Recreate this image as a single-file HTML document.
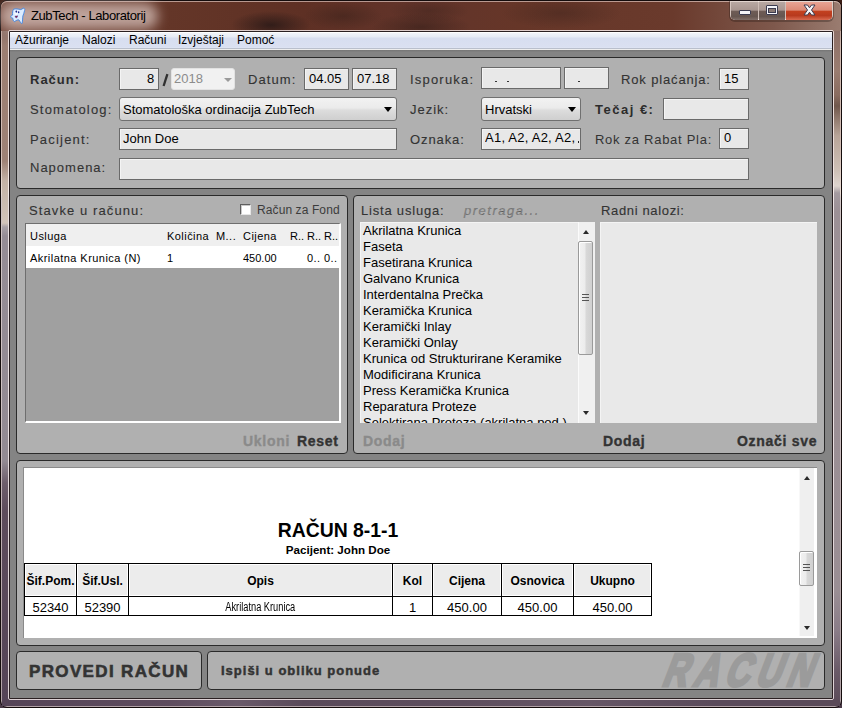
<!DOCTYPE html>
<html><head><meta charset="utf-8">
<style>
*{box-sizing:border-box;margin:0;padding:0}
html,body{width:842px;height:708px;overflow:hidden;background:linear-gradient(180deg,#3a1c14 0px,#3a1c14 40px,#4a3a48 660px)}
body{position:relative;font-family:"Liberation Sans",sans-serif;color:#000}
.a{position:absolute}
#frame{left:0;top:0;width:842px;height:708px;border-radius:7px;border:1px solid #140c0c;
 background:linear-gradient(180deg,#6a3e30 0px,#7a5246 31px,#9a7a6e 45px,#9c7e72 150px,#c0aca0 172px,#d2c4ba 192px,#a69ea4 197px,#978e96 210px,#928892 420px,#7a6a78 480px,#5e4e5c 620px,#534353 708px);
 box-shadow:inset 0 0 0 1px rgba(255,240,235,.55)}
#title{left:1px;top:1px;width:840px;height:30px;border-radius:6px 6px 0 0;
 background:
  radial-gradient(ellipse 40px 14px at 270px 24px,rgba(30,20,20,.7),rgba(30,20,20,0)),
  radial-gradient(ellipse 50px 14px at 420px 26px,rgba(40,25,20,.45),rgba(40,25,20,0)),
  radial-gradient(ellipse 60px 16px at 560px 12px,rgba(50,30,25,.35),rgba(50,30,25,0)),radial-gradient(ellipse 40px 14px at 342px 15px,rgba(40,25,20,.35),rgba(40,25,20,0)),radial-gradient(ellipse 40px 12px at 428px 10px,rgba(40,25,20,.3),rgba(40,25,20,0)),
  linear-gradient(90deg,#7a5044 0%,#643628 20%,#5e3024 36%,#62342a 50%,#663628 62%,#6a3a2c 80%,#7e584c 92%,#9a7c70 100%);
 box-shadow:inset 0 1px 0 rgba(255,235,230,.55)}
#content{left:10px;top:32px;width:822px;height:666px;background:#848484}
#menubar{left:10px;top:32px;width:822px;height:20px;background:linear-gradient(180deg,#ffffff 0px,#ffffff 1px,#f1f4fa 1px,#e6ebf5 5px,#d7def0 6px,#dae0f1 15px,#dfe5f4 16px,#b9bfcc 16px,#b9bfcc 17px,#f0f0f0 17px,#eaeaea 18px,#777 18px,#7a7a7a 19px,#848484 20px)}
.menu{top:33px;font-size:12px;color:#000}
.pn{background:#b0b0b0;border:1px solid #2a2a2a;border-radius:4px}
.lb{font-size:13px;color:#333;-webkit-text-stroke:.12px #333;letter-spacing:.7px;white-space:nowrap}
.lbb{font-size:13px;color:#2c2c2c;font-weight:bold;letter-spacing:.6px;white-space:nowrap}
.inp{background:#e8e8e8;border:1px solid #6a6a6a;box-shadow:inset 1px 1px 0 #f4f4f4;font-size:13px;white-space:nowrap;overflow:hidden}
.cb{background:linear-gradient(180deg,#f2f2f2 0%,#ebebeb 45%,#dddddd 55%,#cfcfcf 100%);border:1px solid #707070;border-radius:3px;font-size:13px;white-space:nowrap;overflow:hidden}
.tb{font-size:11px;line-height:11px;letter-spacing:.45px;white-space:nowrap;color:#000}
.bt{font-size:14px;line-height:14px;font-weight:bold;letter-spacing:.7px;color:#333;-webkit-text-stroke:.35px currentColor;white-space:nowrap}
.rh{font-size:12px;line-height:12px;font-weight:bold;text-align:center;white-space:nowrap}
.rr{font-size:13px;line-height:13px;text-align:center;white-space:nowrap}
</style></head><body>
<div id="frame" class="a"></div>
<div class="a" style="left:2px;top:31px;width:6px;height:675px;background:linear-gradient(180deg,#8e7068 0px,#9c7e72 15px,#9e8276 130px,#c4b2a6 150px,#d2c4ba 192px,#a8a0a6 196px,#958c95 205px,#938a93 430px,#6e5e6c 452px,#5e4c5c 480px,#554457 675px)"></div>
<div class="a" style="left:834px;top:31px;width:6px;height:675px;background:linear-gradient(180deg,#8e7068 0px,#9a7c70 40px,#8a6c60 64px,#70574c 75px,#8a7266 85px,#b8a498 105px,#cec0b6 140px,#ded4ce 155px,#a49aa0 162px,#9c9096 180px,#9a8e94 560px,#8a7c88 600px,#6a5a68 640px,#5a4a58 675px)"></div>
<div class="a" style="left:2px;top:700px;width:838px;height:6px;border-radius:0 0 5px 5px;background:linear-gradient(90deg,#554457 0%,#5e4c5e 20%,#6a5a6a 28%,#5a4a5a 36%,#5e4e5e 55%,#665666 70%,#5a4a5a 85%,#5a4a58 100%)"></div>
<div id="title" class="a"></div>
<div class="a" style="left:0px;top:3px;width:158px;height:26px;border-radius:13px;background:rgba(220,200,194,.72);filter:blur(6px)"></div>
<svg class="a" style="left:6px;top:4px" width="24" height="24" viewBox="0 0 24 24">
 <path d="M7.6 5.2 C9.5 4.6 12.5 4.9 14.8 5.6 L17.4 4.2 C18.6 4.2 19.2 5.4 18.6 6.4 C18.4 8.2 17.4 10.4 16.9 12 C16.6 14.4 16.6 17.6 16 19.6 C15.2 19.8 14.2 18 13 16 C11.6 15.4 10.4 16.6 8.2 17.6 C7.2 17 7 15.6 6.8 14.2 C5.6 14 4.4 13.4 4.8 12.4 C5.2 11.6 6 11.2 6.6 11 C6.4 9.2 6.6 6.4 7.6 5.2 Z" fill="#dcecff" stroke="#4a8ae0" stroke-width="1"/>
 <path d="M8.5 6.5 C10 6 12 6.3 13.5 7 C12 9 11 11 10 13 C9 12 8.2 9 8.5 6.5Z" fill="#ffffff" opacity=".8"/>
 <ellipse cx="10.3" cy="7.6" rx=".9" ry="1.1" fill="#1a2a90"/>
 <ellipse cx="12.6" cy="8.2" rx=".8" ry="1" fill="#1a2a90"/>
 <path d="M9.2 12 Q10.4 12.2 11.6 11.8 Q11.4 13.8 10.2 13.8 Q9.2 13.6 9.2 12Z" fill="#c02030" stroke="#1a2a90" stroke-width=".5"/>
</svg>
<div class="a" style="left:31px;top:9px;font-size:13px;line-height:13px;letter-spacing:-.4px;color:#000;white-space:nowrap">ZubTech - Laboratorij</div>
<div class="a" style="left:729px;top:1px;width:105px;height:21px;border-radius:0 0 6px 6px;background:rgba(40,25,20,.35)"></div>
<div class="a" style="left:730px;top:1px;width:103px;height:19px;border-radius:0 0 5px 5px;overflow:hidden;box-shadow:inset 0 0 0 1px rgba(255,245,240,.75)">
 <div class="a" style="left:1px;top:1px;width:27px;height:18px;background:linear-gradient(180deg,#b8a8a2 0%,#a89690 45%,#6e5c56 52%,#665650 80%,#806e68 100%);border-radius:0 0 0 4px"></div>
 <div class="a" style="left:28px;top:0;width:1px;height:20px;background:rgba(255,245,240,.7)"></div>
 <div class="a" style="left:29px;top:1px;width:26px;height:18px;background:linear-gradient(180deg,#b8a8a2 0%,#a89690 45%,#6e5c56 52%,#665650 80%,#806e68 100%)"></div>
 <div class="a" style="left:55px;top:0;width:1px;height:20px;background:rgba(255,245,240,.7)"></div>
 <div class="a" style="left:56px;top:1px;width:46px;height:18px;background:linear-gradient(180deg,#e8a494 0%,#dc8a76 45%,#c2401f 52%,#b83a1e 75%,#d86a50 100%);border-radius:0 0 4px 0"></div>
</div>
<div class="a" style="left:739px;top:10px;width:12px;height:5px;background:#f4f4f8;border:1px solid #3c3c50;border-radius:1px"></div>
<div class="a" style="left:766px;top:5px;width:12px;height:10px;border:1px solid #3c3c50;border-radius:1px;background:#f4f4f8"></div>
<div class="a" style="left:768px;top:8px;width:8px;height:5px;border:1px solid #3c3c50;background:#8a7a74"></div>
<svg class="a" style="left:802px;top:4px" width="15" height="12" viewBox="0 0 15 12">
 <path d="M2 1 L5.5 1 L7.5 3.8 L9.5 1 L13 1 L9.5 6 L13 11 L9.5 11 L7.5 8.2 L5.5 11 L2 11 L5.5 6 Z" fill="#f6f6fa" stroke="#3c3c50" stroke-width="1"/>
</svg>
<div class="a" style="left:8px;top:30px;width:826px;height:670px;border:1px solid rgba(255,245,245,.8);border-radius:2px"></div><div class="a" style="left:9px;top:31px;width:824px;height:668px;border:1px solid #2a2022;border-radius:1px"></div><div id="content" class="a"></div>
<div id="menubar" class="a"></div>
<div class="a menu" style="left:15px">Ažuriranje</div>
<div class="a menu" style="left:82px">Nalozi</div>
<div class="a menu" style="left:129px">Računi</div>
<div class="a menu" style="left:178px">Izvještaji</div>
<div class="a menu" style="left:237px">Pomoć</div>

<div class="a pn" style="left:16px;top:57px;width:809px;height:132px"></div>
<div class="a pn" style="left:16px;top:195px;width:332px;height:259px"></div>
<div class="a pn" style="left:353px;top:195px;width:472px;height:259px"></div>
<div class="a pn" style="left:16px;top:460px;width:809px;height:186px"></div>
<div class="a pn" style="left:16px;top:651px;width:186px;height:39px"></div>
<div class="a pn" style="left:207px;top:651px;width:618px;height:39px"></div>


<!-- panel1 content -->
<div class="a lbb" style="left:30px;top:73px;line-height:13px;letter-spacing:1.0px">Račun:</div>
<div class="a inp" style="left:119px;top:68px;width:40px;height:22px"></div>
<div class="a" style="left:147px;top:72px;font-size:13px;line-height:13px">8</div>
<svg class="a" style="left:160px;top:72px" width="10" height="16" viewBox="0 0 10 16"><path d="M3.6 14 L7.4 2.2" stroke="#303030" stroke-width="2.3" stroke-linecap="butt"/></svg>
<div class="a" style="left:171px;top:68px;width:64px;height:22px;background:#f1f1f1;border:1px solid #e2e2e2;border-radius:3px"></div>
<div class="a" style="left:174px;top:72px;font-size:13px;line-height:13px;color:#8c8c8c">2018</div>
<div class="a" style="left:224px;top:78px;width:0;height:0;border-left:4px solid transparent;border-right:4px solid transparent;border-top:4px solid #9a9a9a"></div>
<div class="a lb" style="left:248px;top:73px;line-height:13px;letter-spacing:1.1px">Datum:</div>
<div class="a inp" style="left:304px;top:68px;width:45px;height:22px"></div>
<div class="a" style="left:309px;top:72px;font-size:13px;line-height:13px">04.05</div>
<div class="a inp" style="left:352px;top:68px;width:45px;height:22px"></div>
<div class="a" style="left:357px;top:72px;font-size:13px;line-height:13px">07.18</div>
<div class="a lb" style="left:410px;top:73px;line-height:13px;letter-spacing:1.2px">Isporuka:</div>
<div class="a inp" style="left:481px;top:67px;width:80px;height:22px"></div>
<div class="a" style="left:495px;top:81px;width:2px;height:1px;background:#333"></div><div class="a" style="left:507px;top:81px;width:2px;height:1px;background:#333"></div>
<div class="a inp" style="left:564px;top:67px;width:45px;height:22px"></div>
<div class="a" style="left:578px;top:81px;width:2px;height:1px;background:#333"></div>
<div class="a lb" style="left:621px;top:73px;line-height:13px;letter-spacing:.85px">Rok plaćanja:</div>
<div class="a inp" style="left:719px;top:68px;width:30px;height:22px"></div>
<div class="a" style="left:724px;top:72px;font-size:13px;line-height:13px">15</div>

<div class="a lb" style="left:30px;top:103px;line-height:13px;letter-spacing:1.2px">Stomatolog:</div>
<div class="a cb" style="left:119px;top:97px;width:278px;height:24px"></div>
<div class="a" style="left:123px;top:103px;font-size:13px;line-height:13px">Stomatološka ordinacija ZubTech</div>
<div class="a" style="left:384px;top:107px;width:0;height:0;border-left:4.5px solid transparent;border-right:4.5px solid transparent;border-top:5px solid #000"></div>
<div class="a lb" style="left:410px;top:103px;line-height:13px;letter-spacing:1.0px">Jezik:</div>
<div class="a cb" style="left:481px;top:97px;width:100px;height:24px"></div>
<div class="a" style="left:485px;top:103px;font-size:13px;line-height:13px">Hrvatski</div>
<div class="a" style="left:568px;top:107px;width:0;height:0;border-left:4.5px solid transparent;border-right:4.5px solid transparent;border-top:5px solid #000"></div>
<div class="a lbb" style="left:595px;top:103px;line-height:13px;letter-spacing:1.5px">Tečaj €:</div>
<div class="a inp" style="left:663px;top:98px;width:86px;height:22px"></div>

<div class="a lb" style="left:30px;top:133px;line-height:13px;letter-spacing:1.2px">Pacijent:</div>
<div class="a inp" style="left:119px;top:128px;width:278px;height:22px"></div>
<div class="a" style="left:123px;top:132px;font-size:13px;line-height:13px">John Doe</div>
<div class="a lb" style="left:410px;top:133px;line-height:13px;letter-spacing:.9px">Oznaka:</div>
<div class="a inp" style="left:481px;top:128px;width:100px;height:22px"></div>
<div class="a" style="left:485px;top:131px;width:93px;overflow:hidden;font-size:13px;line-height:13px;letter-spacing:.24px;white-space:nowrap">A1, A2, A2, A2,</div><div class="a" style="left:578px;top:141px;width:1px;height:2px;background:#222"></div>
<div class="a lbb" style="left:595px;top:133px;line-height:13px;font-weight:normal;color:#333;letter-spacing:.72px">Rok za Rabat Pla:</div>
<div class="a inp" style="left:719px;top:128px;width:30px;height:21px"></div>
<div class="a" style="left:724px;top:131px;font-size:13px;line-height:13px">0</div>

<div class="a lb" style="left:30px;top:161px;line-height:13px;letter-spacing:1px">Napomena:</div>
<div class="a inp" style="left:119px;top:158px;width:630px;height:22px"></div>

<!-- panel2 -->
<div class="a lb" style="left:29px;top:204px;line-height:13px;letter-spacing:1.1px">Stavke u računu:</div>
<div class="a" style="left:240px;top:204px;width:11px;height:11px;background:#fff;border-top:1px solid #5e5e5e;border-left:1px solid #5e5e5e;border-right:1px solid #e6e6e6;border-bottom:1px solid #e6e6e6;box-shadow:inset 1px 1px 0 #c8c8c8"></div>
<div class="a" style="left:257px;top:204px;font-size:12px;line-height:12px;color:#3c3c3c;letter-spacing:.1px;white-space:nowrap">Račun za Fond</div>
<div class="a" style="left:25px;top:223px;width:316px;height:200px;background:#a0a0a0;border-top:1px solid #6e6e6e;border-left:1px solid #6e6e6e;border-right:2px solid #fff;border-bottom:2px solid #fff"></div>
<div class="a" style="left:26px;top:224px;width:313px;height:22px;background:#efefef"></div>
<div class="a" style="left:26px;top:246px;width:313px;height:22px;background:#fff"></div>
<div class="a tb" style="left:30px;top:231px">Usluga</div>
<div class="a tb" style="left:167px;top:231px">Količina</div>
<div class="a tb" style="left:216px;top:231px">M...</div>
<div class="a tb" style="left:243px;top:231px">Cijena</div>
<div class="a tb" style="left:290px;top:231px;letter-spacing:0">R..</div>
<div class="a tb" style="left:307px;top:231px;letter-spacing:0">R..</div>
<div class="a tb" style="left:324px;top:231px;letter-spacing:0">R..</div>
<div class="a tb" style="left:30px;top:253px">Akrilatna Krunica (N)</div>
<div class="a tb" style="left:167px;top:253px">1</div>
<div class="a tb" style="left:243px;top:253px;letter-spacing:0">450.00</div>
<div class="a tb" style="left:307px;top:253px">0..</div>
<div class="a tb" style="left:324px;top:253px">0..</div>
<div class="a bt" style="left:243px;top:434px;color:#8a8a8a">Ukloni</div>
<div class="a bt" style="left:297px;top:434px">Reset</div>

<!-- panel3 -->
<div class="a lb" style="left:361px;top:204px;line-height:13px;letter-spacing:.8px">Lista usluga:</div>
<div class="a lb" style="left:464px;top:204px;line-height:13px;letter-spacing:1.5px;font-style:italic;color:#858585">pretraga...</div>
<div class="a lb" style="left:601px;top:204px;line-height:13px;letter-spacing:.65px">Radni nalozi:</div>
<div class="a" style="left:360px;top:222px;width:235px;height:201px;background:#e9e9e9;border-top:1px solid #f4f4f4;border-left:1px solid #f4f4f4;overflow:hidden"><div class="a" style="left:2px;top:1px;font-size:13px;line-height:13px;white-space:nowrap">Akrilatna Krunica</div><div class="a" style="left:2px;top:17px;font-size:13px;line-height:13px;white-space:nowrap">Faseta</div><div class="a" style="left:2px;top:33px;font-size:13px;line-height:13px;white-space:nowrap">Fasetirana Krunica</div><div class="a" style="left:2px;top:49px;font-size:13px;line-height:13px;white-space:nowrap">Galvano Krunica</div><div class="a" style="left:2px;top:65px;font-size:13px;line-height:13px;white-space:nowrap">Interdentalna Prečka</div><div class="a" style="left:2px;top:81px;font-size:13px;line-height:13px;white-space:nowrap">Keramička Krunica</div><div class="a" style="left:2px;top:97px;font-size:13px;line-height:13px;white-space:nowrap">Keramički Inlay</div><div class="a" style="left:2px;top:113px;font-size:13px;line-height:13px;white-space:nowrap">Keramički Onlay</div><div class="a" style="left:2px;top:129px;font-size:13px;line-height:13px;white-space:nowrap">Krunica od Strukturirane Keramike</div><div class="a" style="left:2px;top:145px;font-size:13px;line-height:13px;white-space:nowrap">Modificirana Krunica</div><div class="a" style="left:2px;top:161px;font-size:13px;line-height:13px;white-space:nowrap">Press Keramička Krunica</div><div class="a" style="left:2px;top:177px;font-size:13px;line-height:13px;white-space:nowrap">Reparatura Proteze</div><div class="a" style="left:2px;top:193px;font-size:13px;line-height:13px;white-space:nowrap">Selektirana Proteza (akrilatna pod.)</div></div>
<div class="a" style="left:578px;top:222px;width:17px;height:201px;background:#f0f0f0;border-left:1px solid #fbfbfb"></div>
<div class="a" style="left:583px;top:230px;width:0;height:0;border-left:3.5px solid transparent;border-right:3.5px solid transparent;border-bottom:4px solid #2a2a2a"></div>
<div class="a" style="left:583px;top:411px;width:0;height:0;border-left:3.5px solid transparent;border-right:3.5px solid transparent;border-top:4px solid #2a2a2a"></div>
<div class="a" style="left:578px;top:241px;width:15px;height:114px;border:1px solid #9a9a9a;border-radius:2px;background:linear-gradient(90deg,#f2f2f2 0%,#ececec 45%,#d8d8d8 55%,#d0d0d0 100%);box-shadow:inset 1px 1px 0 #fff"></div>
<div class="a" style="left:582px;top:294px;width:7px;height:7px;border-top:1px solid #555;border-bottom:1px solid #555"></div>
<div class="a" style="left:582px;top:297px;width:7px;height:1px;background:#555"></div>
<div class="a" style="left:600px;top:222px;width:217px;height:201px;background:#e9e9e9;border-top:1px solid #f4f4f4;border-left:1px solid #f4f4f4"></div>
<div class="a bt" style="left:363px;top:434px;color:#8a8a8a">Dodaj</div>
<div class="a bt" style="left:603px;top:434px">Dodaj</div>
<div class="a bt" style="left:737px;top:434px">Označi sve</div>

<!-- panel4 report -->
<div class="a" style="left:23px;top:467px;width:794px;height:171px;background:#fff;border-left:1px solid #8a8a8a;border-top:1px solid #8a8a8a"></div>
<div class="a" style="left:799px;top:468px;width:15px;height:168px;background:#efefef;border-left:1px solid #f8f8f8"></div>
<div class="a" style="left:804px;top:476px;width:0;height:0;border-left:3.5px solid transparent;border-right:3.5px solid transparent;border-bottom:4px solid #2a2a2a"></div>
<div class="a" style="left:804px;top:626px;width:0;height:0;border-left:3.5px solid transparent;border-right:3.5px solid transparent;border-top:4px solid #2a2a2a"></div>
<div class="a" style="left:799px;top:551px;width:15px;height:35px;border:1px solid #9a9a9a;border-radius:2px;background:linear-gradient(90deg,#f2f2f2 0%,#ececec 45%,#d8d8d8 55%,#d0d0d0 100%);box-shadow:inset 1px 1px 0 #fff"></div>
<div class="a" style="left:803px;top:564px;width:7px;height:7px;border-top:1px solid #555;border-bottom:1px solid #555"></div>
<div class="a" style="left:803px;top:567px;width:7px;height:1px;background:#555"></div>
<div class="a" style="left:24px;top:521px;width:628px;text-align:center;font-size:19.4px;line-height:19px;font-weight:bold;white-space:nowrap">RAČUN 8-1-1</div>
<div class="a" style="left:24px;top:544px;width:628px;text-align:center;font-size:11.6px;line-height:12px;font-weight:bold;white-space:nowrap">Pacijent: John Doe</div>
<div class="a" style="left:24px;top:563px;width:628px;height:1px;background:#000"></div><div class="a" style="left:24px;top:596px;width:628px;height:1px;background:#000"></div><div class="a" style="left:24px;top:615px;width:628px;height:1px;background:#000"></div><div class="a" style="left:24px;top:563px;width:1px;height:53px;background:#000"></div><div class="a" style="left:76px;top:563px;width:1px;height:53px;background:#000"></div><div class="a" style="left:128px;top:563px;width:1px;height:53px;background:#000"></div><div class="a" style="left:392px;top:563px;width:1px;height:53px;background:#000"></div><div class="a" style="left:432px;top:563px;width:1px;height:53px;background:#000"></div><div class="a" style="left:501px;top:563px;width:1px;height:53px;background:#000"></div><div class="a" style="left:573px;top:563px;width:1px;height:53px;background:#000"></div><div class="a" style="left:651px;top:563px;width:1px;height:53px;background:#000"></div>
<div class="a" style="left:25px;top:564px;width:51px;height:32px;background:#ececec;box-shadow:inset 1px 1px 0 #fff,inset -1px -1px 0 #fff"></div><div class="a rh" style="left:25px;top:575px;width:51px">Šif.Pom.</div><div class="a rr" style="left:25px;top:601px;width:51px">52340</div><div class="a" style="left:77px;top:564px;width:51px;height:32px;background:#ececec;box-shadow:inset 1px 1px 0 #fff,inset -1px -1px 0 #fff"></div><div class="a rh" style="left:77px;top:575px;width:51px">Šif.Usl.</div><div class="a rr" style="left:77px;top:601px;width:51px">52390</div><div class="a" style="left:129px;top:564px;width:263px;height:32px;background:#ececec;box-shadow:inset 1px 1px 0 #fff,inset -1px -1px 0 #fff"></div><div class="a rh" style="left:129px;top:575px;width:263px">Opis</div><div class="a" style="left:393px;top:564px;width:39px;height:32px;background:#ececec;box-shadow:inset 1px 1px 0 #fff,inset -1px -1px 0 #fff"></div><div class="a rh" style="left:393px;top:575px;width:39px">Kol</div><div class="a rr" style="left:393px;top:601px;width:39px">1</div><div class="a" style="left:433px;top:564px;width:68px;height:32px;background:#ececec;box-shadow:inset 1px 1px 0 #fff,inset -1px -1px 0 #fff"></div><div class="a rh" style="left:433px;top:575px;width:68px">Cijena</div><div class="a rr" style="left:433px;top:601px;width:68px">450.00</div><div class="a" style="left:502px;top:564px;width:71px;height:32px;background:#ececec;box-shadow:inset 1px 1px 0 #fff,inset -1px -1px 0 #fff"></div><div class="a rh" style="left:502px;top:575px;width:71px">Osnovica</div><div class="a rr" style="left:502px;top:601px;width:71px">450.00</div><div class="a" style="left:574px;top:564px;width:77px;height:32px;background:#ececec;box-shadow:inset 1px 1px 0 #fff,inset -1px -1px 0 #fff"></div><div class="a rh" style="left:574px;top:575px;width:77px">Ukupno</div><div class="a rr" style="left:574px;top:601px;width:77px">450.00</div><div class="a" style="left:129px;top:601px;width:263px;text-align:center;font-size:12.5px;line-height:12px;white-space:nowrap"><span style="display:inline-block;transform:scaleX(.74)">Akrilatna Krunica</span></div>

<!-- panel5/6 -->
<div class="a" style="left:29px;top:663px;font-size:17px;line-height:17px;font-weight:bold;letter-spacing:1.35px;color:#333;-webkit-text-stroke:.6px #333;white-space:nowrap">PROVEDI RAČUN</div>
<div class="a" style="left:221px;top:664px;font-size:13px;line-height:13px;font-weight:bold;letter-spacing:1px;color:#333;-webkit-text-stroke:.45px #333;white-space:nowrap">Ispiši u obliku ponude</div>
<div class="a" style="left:208px;top:652px;width:616px;height:37px;overflow:hidden;border-radius:3px">
 <div class="a" style="left:459px;top:-5px;font-size:46px;line-height:46px;font-weight:bold;color:#9b9b9b;-webkit-text-stroke:3.2px #9b9b9b;white-space:nowrap;letter-spacing:8.7px;transform:skewX(-21deg) scaleX(.74);transform-origin:0 50%">RACUN</div>
</div>
</body></html>
